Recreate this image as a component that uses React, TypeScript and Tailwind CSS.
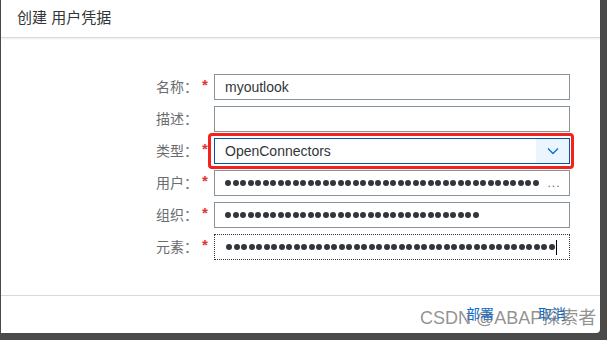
import React from 'react';

const rows = [
  { label: '名称：', required: true, kind: 'text', value: 'myoutlook' },
  { label: '描述：', required: false, kind: 'text', value: '' },
  { label: '类型：', required: true, kind: 'select', value: 'OpenConnectors' },
  { label: '用户：', required: true, kind: 'secret', dots: 42, more: true },
  { label: '组织：', required: true, kind: 'secret', dots: 34 },
  { label: '元素：', required: true, kind: 'secret', dots: 44, focused: true },
];

function Dots({ count }: { count: number }) {
  return (
    <div className="flex items-center gap-[1.5px]">
      {Array.from({ length: count }).map((_, i) => (
        <span key={i} className="h-[6px] w-[6px] shrink-0 rounded-full bg-[#32363a]" />
      ))}
    </div>
  );
}

function Field({ row }: { row: any }) {
  if (row.kind === 'select') {
    return (
      <div className="relative">
        {/* red highlight */}
        <div className="pointer-events-none absolute -left-[6px] -right-[4px] -top-[5px] -bottom-[5px] rounded-[4px] border-[3px] border-[#f3221e]" />
        <div className="flex h-[26px] items-stretch border border-[#0854a0] bg-white">
          <div className="flex flex-1 items-center pl-[10px] text-[14px] text-[#32363a]">{row.value}</div>
          <div className="flex w-[33px] items-center justify-center bg-[#ebf5fe]">
            <svg width="12" height="8" viewBox="0 0 12 8" fill="none">
              <path d="M1 1.5 L6 6.5 L11 1.5" stroke="#0a6ed1" strokeWidth="1.3" />
            </svg>
          </div>
        </div>
      </div>
    );
  }
  if (row.kind === 'secret') {
    return (
      <div
        className={
          row.focused
            ? 'flex h-[26px] items-center border border-dotted border-[#32363a] bg-white pl-[11px]'
            : 'flex h-[26px] items-center border border-[#89919a] bg-white pl-[10px]'
        }
      >
        <Dots count={row.dots} />
        {row.more && <span className="ml-[9px] text-[12px] tracking-[1px] text-[#6a6d70]">...</span>}
        {row.focused && <span className="ml-[1px] h-[15px] w-[1px] bg-[#000]" />}
      </div>
    );
  }
  return (
    <div className="flex h-[26px] items-center border border-[#89919a] bg-white pl-[10px] text-[14px] text-[#32363a]">
      {row.value}
    </div>
  );
}

export default function App() {
  return (
    <div className="relative h-[340px] w-[607px] overflow-hidden bg-[#4a4a4a] font-['Liberation_Sans','Noto_Sans_CJK_SC',sans-serif]">
      <div className="ml-[1px] flex h-[333px] w-[599px] flex-col rounded-br-[4px] bg-white">
        {/* Header */}
        <div className="flex h-[38px] items-center border-b border-[#d9d9d9] pl-[16px] text-[15px] text-[#32363a] shadow-[0_1px_2px_rgba(0,0,0,0.08)]">
          创建 用户凭据
        </div>

        {/* Body */}
        <div className="flex-1 pt-[36px]">
          <div className="flex flex-col gap-[6px]">
            {rows.map((row) => (
              <div key={row.label} className="flex items-center">
                <div className="w-[197px] text-right text-[14px] text-[#6a6d70]">{row.label}</div>
                <div className="w-[16px] pl-[4px] text-[15px] font-bold leading-none text-[#e0342e] -translate-y-[3px]">
                  {row.required ? '*' : ''}
                </div>
                <div className="w-[356px]">
                  <Field row={row} />
                </div>
              </div>
            ))}
          </div>
        </div>

        {/* Footer */}
        <div className="flex h-[38px] items-center justify-end gap-[44px] border-t border-[#d9d9d9] pr-[34px] text-[14px] text-[#0a6ed1]">
          <span>部署</span>
          <span>取消</span>
        </div>
      </div>

      {/* watermark */}
      <div className="pointer-events-none absolute left-[420px] top-[305px] text-[18px] text-[rgba(110,110,110,0.75)]">
        CSDN @ABAP探索者
      </div>
    </div>
  );
}
